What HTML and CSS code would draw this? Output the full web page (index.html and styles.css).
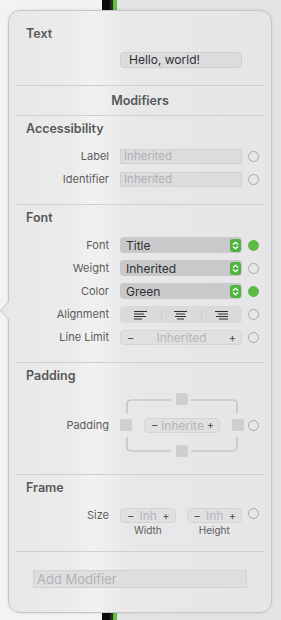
FILE: index.html
```html
<!DOCTYPE html>
<html>
<head>
    <meta charset="UTF-8">
    <title>Inspector</title>
    <link rel="stylesheet" href="styles.css">
</head>
<body>
    <div class="popover">
        <div class="block text-block">
            <h3 class="heading">Text</h3>
            <div class="row first">
                <span></span>
                <div class="textfield">Hello, world!</div>
            </div>
        </div>

        <div class="title">Modifiers</div>

        <div class="block">
            <h3 class="heading">Accessibility</h3>
            <div class="rows">
                <div class="row">
                    <label>Label</label>
                    <div class="field">Inherited</div>
                    <span class="dot"></span>
                </div>
                <div class="row">
                    <label>Identifier</label>
                    <div class="field">Inherited</div>
                    <span class="dot"></span>
                </div>
            </div>
        </div>

        <div class="block font-block">
            <h3 class="heading">Font</h3>
            <div class="rows">
                <div class="row">
                    <label>Font</label>
                    <div class="popup"><span>Title</span><span class="arrows"><svg width="11" height="13" viewBox="0 0 11 13"><path d="M3.3 5.2 L5.5 3.2 L7.7 5.2 M3.3 7.8 L5.5 9.8 L7.7 7.8" fill="none" stroke="#fff" stroke-width="1.3" stroke-linecap="round" stroke-linejoin="round"/></svg></span></div>
                    <span class="dot on"></span>
                </div>
                <div class="row">
                    <label>Weight</label>
                    <div class="popup"><span>Inherited</span><span class="arrows"><svg width="11" height="13" viewBox="0 0 11 13"><path d="M3.3 5.2 L5.5 3.2 L7.7 5.2 M3.3 7.8 L5.5 9.8 L7.7 7.8" fill="none" stroke="#fff" stroke-width="1.3" stroke-linecap="round" stroke-linejoin="round"/></svg></span></div>
                    <span class="dot"></span>
                </div>
                <div class="row">
                    <label>Color</label>
                    <div class="popup"><span>Green</span><span class="arrows"><svg width="11" height="13" viewBox="0 0 11 13"><path d="M3.3 5.2 L5.5 3.2 L7.7 5.2 M3.3 7.8 L5.5 9.8 L7.7 7.8" fill="none" stroke="#fff" stroke-width="1.3" stroke-linecap="round" stroke-linejoin="round"/></svg></span></div>
                    <span class="dot on"></span>
                </div>
                <div class="row">
                    <label>Alignment</label>
                    <div class="segmented">
                        <span class="seg"><svg width="15" height="10" viewBox="0 0 15 10"><path d="M1 1.5 H14 M1 4 H11 M1 6.5 H13 M1 9 H9" stroke="#2e2e2e" stroke-width="1.1"/></svg></span>
                        <span class="seg"><svg width="15" height="10" viewBox="0 0 15 10"><path d="M1 1.5 H14 M3 4 H12 M2 6.5 H13 M4 9 H11" stroke="#2e2e2e" stroke-width="1.1"/></svg></span>
                        <span class="seg"><svg width="15" height="10" viewBox="0 0 15 10"><path d="M1 1.5 H14 M4 4 H14 M2 6.5 H14 M5 9 H14" stroke="#2e2e2e" stroke-width="1.1"/></svg></span>
                    </div>
                    <span class="dot"></span>
                </div>
                <div class="row">
                    <label>Line Limit</label>
                    <div class="stepper"><span class="sign">−</span><span>Inherited</span><span class="sign">+</span></div>
                    <span class="dot"></span>
                </div>
            </div>
        </div>

        <div class="block">
            <h3 class="heading">Padding</h3>
            <div class="rows padding-rows">
                <div class="row">
                    <label>Padding</label>
                    <div class="box">
                        <svg class="box-lines" width="124" height="64" viewBox="0 0 124 64">
                            <path d="M51 7 H11 A4 4 0 0 0 7 11 V20 M71 7 H113 A4 4 0 0 1 117 11 V20 M7 44 V54 A4 4 0 0 0 11 58 H51 M117 44 V54 A4 4 0 0 1 113 58 H71" fill="none" stroke="#b8b8ba" stroke-width="1.2"/>
                        </svg>
                        <span class="knob top"></span>
                        <span class="knob left"></span>
                        <div class="stepper small"><span class="sign">−</span><span>Inherite</span><span class="sign">+</span></div>
                        <span class="knob right"></span>
                        <span class="knob bottom"></span>
                    </div>
                    <span class="dot"></span>
                </div>
            </div>
        </div>

        <div class="block frame-block">
            <h3 class="heading">Frame</h3>
            <div class="rows">
                <div class="row top">
                    <label>Size</label>
                    <div class="pair">
                        <div class="dim">
                            <div class="stepper"><span class="sign">−</span><span>Inh</span><span class="sign">+</span></div>
                            <div class="caption">Width</div>
                        </div>
                        <div class="dim">
                            <div class="stepper"><span class="sign">−</span><span>Inh</span><span class="sign">+</span></div>
                            <div class="caption">Height</div>
                        </div>
                    </div>
                    <span class="dot"></span>
                </div>
            </div>
        </div>

        <div class="add">Add Modifier</div>
    </div>
</body>
</html>
```

FILE: styles.css
```css
* {
    box-sizing: border-box;
}
body {
    margin: 0;
    padding-top: 10px;
    height: 620px;
    overflow: hidden;
    font-family: Inter, "Noto Sans", sans-serif;
    background: linear-gradient(90deg, #f3f3f3 0, #f3f3f3 102px, #0c0c0c 102px, #0c0c0c 110px, #2a2a2a 110px, #2a2a2a 113px, #5dc23c 113px, #5dc23c 117px, #e4e4e6 117px);
}
.popover {
    position: relative;
    margin-left: 8px;
    width: 264px;
    height: 603px;
    padding: 0 7px;
    border: 1px solid #c6c6c8;
    border-radius: 12px;
    background: linear-gradient(90deg, #e8e8ea 0%, #ebebec 24%, #f1f1f1 32%, #eeeeef 37%, #e8e8ea 44%, #e6e6e9 100%);
    box-shadow: 0 0 3px rgba(0, 0, 0, 0.12);
}
.popover::before {
    content: "";
    position: absolute;
    left: -7px;
    top: 293px;
    width: 12px;
    height: 12px;
    background: #e8e8ea;
    border-left: 1px solid #c6c6c8;
    border-bottom: 1px solid #c6c6c8;
    border-radius: 0 0 0 3px;
    transform: rotate(45deg);
}
.block {
    padding: 5px 0 17px;
    border-bottom: 1px solid #cfcfd1;
}
.text-block {
    padding-top: 15px;
}
.heading {
    margin: 0;
    padding-left: 10px;
    font-size: 12.5px;
    line-height: 15px;
    font-weight: 600;
    color: #575757;
}
.title {
    padding: 7px 0;
    font-size: 12.5px;
    line-height: 15px;
    font-weight: 600;
    color: #575757;
    text-align: center;
    border-bottom: 1px solid #cfcfd1;
}
.rows {
    display: flex;
    flex-direction: column;
    gap: 8px;
    margin-top: 13px;
}
.font-block {
    padding-bottom: 17px;
}
.font-block .rows {
    gap: 7px;
    margin-top: 12px;
}
.padding-rows {
    margin-top: 10px;
}
.frame-block {
    padding-bottom: 15px;
}
.row {
    display: grid;
    grid-template-columns: 98px 122px 12px;
    column-gap: 6px;
    align-items: center;
}
.row.first {
    margin-top: 11px;
}
.row.top {
    align-items: start;
}
label {
    padding-right: 5px;
    text-align: right;
    font-size: 11px;
    line-height: 15px;
    color: #5c5c5c;
}
.textfield {
    height: 16px;
    padding-left: 8px;
    border: 1px solid #cfcfd2;
    border-radius: 4px;
    background: #dcdcdf;
    font-size: 12px;
    line-height: 14px;
    color: #2e2e2e;
}
.field {
    height: 15px;
    padding-left: 3px;
    border: 1px solid #d0d0d2;
    background: #dcdcde;
    font-size: 11.5px;
    line-height: 13px;
    color: #b0b0b2;
}
.popup {
    display: flex;
    justify-content: space-between;
    align-items: center;
    height: 16px;
    padding: 0 1px 0 6px;
    border-radius: 4px;
    background: #c9c9cc;
    font-size: 12px;
    color: #303030;
}
.arrows {
    display: flex;
    width: 11px;
    height: 13px;
    border-radius: 3px;
    background: #4fb43c;
}
.segmented {
    display: grid;
    grid-template-columns: 1fr 1fr 1fr;
    height: 17px;
    border-radius: 4px;
    background: #dadadc;
}
.seg {
    display: flex;
    justify-content: center;
    align-items: center;
}
.seg + .seg {
    background: linear-gradient(#c9c9cb, #c9c9cb) left center / 1px 8px no-repeat;
}
.stepper {
    display: flex;
    justify-content: space-between;
    align-items: center;
    height: 15px;
    padding: 0 5px 0 6px;
    border: 1px solid #d4d4d6;
    border-radius: 4px;
    background: #e0e0e2;
    font-size: 12px;
    color: #b6b6b8;
}
.sign {
    color: #4a4a4a;
    font-size: 11px;
}
.dot {
    width: 11px;
    height: 11px;
    border: 1px solid #a9a9ab;
    border-radius: 50%;
}
.dot.on {
    background: #5cb946;
    border-color: #5cb946;
}
.box {
    position: relative;
    display: grid;
    grid-template-columns: 12px 1fr 12px;
    grid-template-rows: 12px 1fr 12px;
    align-items: center;
    height: 64px;
    width: 124px;
}
.box-lines {
    position: absolute;
    left: 0;
    top: 0;
}
.knob {
    width: 12px;
    height: 12px;
    border-radius: 2px;
    background: #cfcfd1;
    position: relative;
}
.knob.top {
    grid-column: 2;
    grid-row: 1;
    justify-self: center;
}
.knob.left {
    grid-column: 1;
    grid-row: 2;
}
.knob.right {
    grid-column: 3;
    grid-row: 2;
}
.knob.bottom {
    grid-column: 2;
    grid-row: 3;
    justify-self: center;
}
.stepper.small {
    grid-column: 2;
    grid-row: 2;
    width: 76px;
    height: 15px;
    margin-left: 12px;
    position: relative;
}
.pair {
    display: grid;
    grid-template-columns: 1fr 1fr;
    column-gap: 11px;
}
.caption {
    margin-top: 1px;
    font-size: 10px;
    line-height: 12px;
    text-align: center;
    color: #5c5c5c;
}
.add {
    margin: 18px 0 0 17px;
    width: 214px;
    height: 18px;
    padding-left: 3px;
    border: 1px solid #d2d2d4;
    background: #dedee0;
    font-size: 13px;
    line-height: 16px;
    color: #b2b2b4;
}
```
